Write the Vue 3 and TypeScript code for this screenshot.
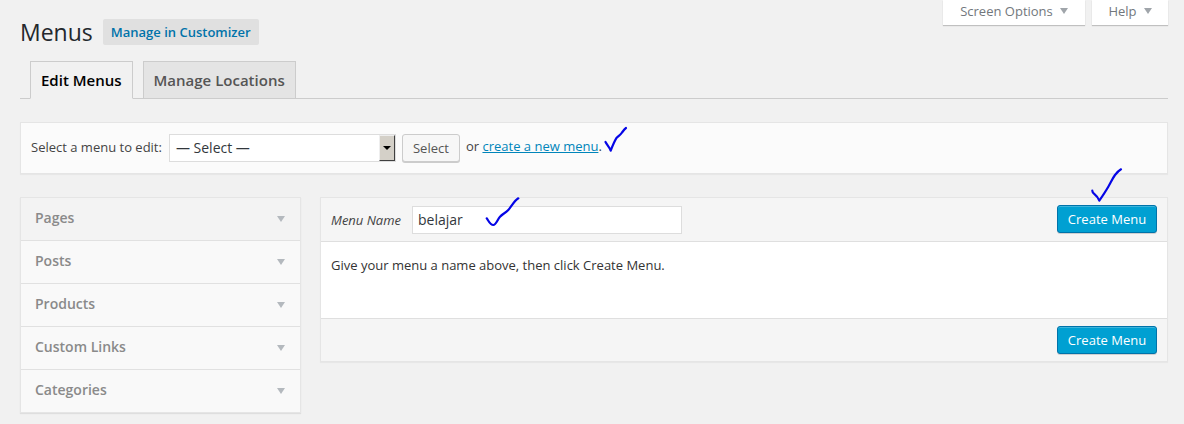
<script setup lang="ts">
const boxes: string[] = ['Pages', 'Posts', 'Products', 'Custom Links', 'Categories']
</script>

<template>
  <div class="page">
    <div class="meta">
      <div class="meta-btn so">Screen Options<span class="arrow"></span></div>
      <div class="meta-btn help">Help<span class="arrow"></span></div>
    </div>

    <div class="heading">
      <h1>Menus</h1>
      <a class="title-action">Manage in Customizer</a>
    </div>

    <div class="tabs">
      <div class="tab active">Edit Menus</div>
      <div class="tab">Manage Locations</div>
    </div>

    <div class="manage">
      <span class="lbl">Select a menu to edit:</span>
      <div class="select">
        <span class="sel-text">— Select —</span>
        <span class="sel-btn"><i></i></span>
      </div>
      <button class="btn">Select</button>
      <span class="or">or <a>create a new menu</a>.</span>
    </div>

    <div class="columns">
      <div class="side">
        <div v-for="(b, i) in boxes" :key="b" class="box" :class="{ first: i === 0 }">
          <span>{{ b }}</span>
          <i class="box-arrow"></i>
        </div>
      </div>
      <div class="editor">
        <div class="ed-head">
          <label>Menu Name</label>
          <div class="name-input">belajar</div>
          <button class="primary top">Create Menu</button>
        </div>
        <div class="ed-body">Give your menu a name above, then click Create Menu.</div>
        <div class="ed-foot">
          <button class="primary">Create Menu</button>
        </div>
      </div>
    </div>

    <svg class="marks" width="1184" height="424" viewBox="0 0 1184 424" fill="none" stroke="#0505e6" stroke-width="2.2" stroke-linecap="round" stroke-linejoin="round">
      <path d="M605.5 142 C607 145 609.5 147 610.7 150.7 C612.5 146 614.5 141 616.7 137.7 C619 135.5 620.5 135 622 132.5 C623.5 130.5 624.5 129 626 128" />
      <path d="M486.7 218.3 C488.5 220.5 490 225 493.3 225 C496 225 497.5 219.5 500 216.7 C502.5 214 505.5 213 508.3 210 C511.5 206.5 514 201 518.3 198.3" />
      <path d="M1092.3 190.7 C1092.3 194.5 1096.5 193.5 1099.3 200.7 C1102.5 196 1105.5 191.5 1108.3 186.7 C1110.5 183 1112.5 178.5 1115 175 C1117 172.5 1119 170.5 1121 169.3" />
    </svg>
  </div>
</template>

<style>
html, body { margin: 0; background: #f1f1f1; }
</style>

<style scoped>
.page {
  position: relative;
  width: 1184px;
  height: 424px;
  box-sizing: border-box;
  padding: 0 16px 0 20px;
  overflow: hidden;
  background: #f1f1f1;
  color: #444;
  font-family: "Open Sans", sans-serif;
  font-size: 13px;
}
.meta { display: flex; justify-content: flex-end; gap: 7px; height: 0; }
.meta-btn {
  height: 25px;
  box-sizing: border-box;
  background: #fff;
  box-shadow: 0 1px 1px rgba(0,0,0,.2);
  color: #72777c;
  line-height: 23px;
  display: flex;
  justify-content: center;
  gap: 7px;
}
.so { width: 142px; }
.help { width: 76px; }
.arrow {
  width: 0; height: 0;
  margin-top: 8px;
  border-left: 4px solid transparent;
  border-right: 4px solid transparent;
  border-top: 6px solid #a0a5aa;
}
.heading { display: flex; align-items: flex-start; padding-top: 19px; height: 42px; box-sizing: content-box; }
h1 { margin: 0; font-size: 23px; font-weight: 400; line-height: 26px; color: #23282d; }
.title-action {
  margin-left: 10px;
  height: 26px;
  box-sizing: border-box;
  padding: 0 8px;
  background: #e0e0e0;
  border-radius: 2px;
  color: #0073aa;
  font-weight: 600;
  line-height: 26px;
}
.tabs {
  display: flex;
  gap: 10px;
  height: 38px;
  box-sizing: border-box;
  padding-left: 10px;
  border-bottom: 1px solid #ccc;
}
.tab {
  height: 38px;
  box-sizing: border-box;
  padding: 0 10px;
  border: 1px solid #ccc;
  background: #e4e4e4;
  color: #555;
  font-size: 15px;
  font-weight: 600;
  line-height: 36px;
}
.tab.active { background: #f1f1f1; border-bottom-color: #f1f1f1; color: #000; }
.manage {
  margin-top: 23px;
  height: 52px;
  box-sizing: border-box;
  border: 1px solid #e5e5e5;
  background: #fbfbfb;
  box-shadow: 0 1px 1px rgba(0,0,0,.04);
  padding: 11px 10px 0;
  display: flex;
  align-items: flex-start;
}
.lbl { line-height: 26px; white-space: nowrap; }
.select {
  margin-left: 7px;
  width: 227px;
  height: 28px;
  box-sizing: border-box;
  border: 1px solid #ddd;
  background: #fff;
  display: flex;
  justify-content: space-between;
  font-size: 14px;
  line-height: 26px;
  color: #32373c;
}
.sel-text { padding-left: 6px; }
.sel-btn {
  width: 16px;
  height: 26px;
  box-sizing: border-box;
  background: #d4d0c8;
  border: 1px solid;
  border-color: #eee #404040 #404040 #eee;
  display: flex;
  align-items: center;
  justify-content: center;
}
.sel-btn i {
  width: 0; height: 0;
  border-left: 4px solid transparent;
  border-right: 4px solid transparent;
  border-top: 4px solid #000;
}
.btn {
  margin-left: 6px;
  width: 58px;
  height: 28px;
  box-sizing: border-box;
  padding: 0;
  border: 1px solid #ccc;
  border-radius: 3px;
  background: #f7f7f7;
  box-shadow: 0 1px 0 #ccc;
  color: #555;
  font: 13px/26px "Open Sans", sans-serif;
}
.or { margin-left: 6px; line-height: 24px; white-space: nowrap; }
.or a { color: #0085ba; text-decoration: underline; }
.columns { margin-top: 23px; display: flex; align-items: flex-start; gap: 19px; }
.side {
  width: 281px;
  box-sizing: border-box;
  border: 1px solid #e5e5e5;
  box-shadow: 0 1px 1px rgba(0,0,0,.08);
  background: #f9f9f9;
}
.box {
  height: 43px;
  box-sizing: border-box;
  border-top: 1px solid #e1e1e1;
  padding: 0 14px 4px;
  display: flex;
  align-items: center;
  justify-content: space-between;
  color: #8a8a8a;
  font-size: 14px;
  font-weight: 600;
}
.box.first { height: 42px; border-top: 0; background: #f3f3f3; }
.box-arrow {
  width: 0; height: 0;
  margin: 4px 1px 0 0;
  border-left: 4px solid transparent;
  border-right: 4px solid transparent;
  border-top: 6px solid #b4b9be;
}
.editor {
  width: 848px;
  box-sizing: border-box;
  border: 1px solid #e5e5e5;
  box-shadow: 0 1px 1px rgba(0,0,0,.04);
  background: #f5f5f5;
}
.ed-head {
  height: 44px;
  box-sizing: border-box;
  padding: 8px 10px 0;
  border-bottom: 1px solid #dfdfdf;
  display: flex;
  align-items: flex-start;
}
label { font-style: italic; line-height: 28px; width: 81px; }
.name-input {
  width: 270px;
  height: 28px;
  box-sizing: border-box;
  border: 1px solid #ddd;
  background: #fff;
  padding-left: 5px;
  font-size: 14px;
  line-height: 26px;
  color: #32373c;
}
.primary {
  margin-left: auto;
  width: 100px;
  height: 28px;
  box-sizing: border-box;
  padding: 0;
  border: 1px solid #0073aa;
  border-radius: 3px;
  background: #00a0d2;
  color: #fff;
  font: 13px/26px "Open Sans", sans-serif;
  box-shadow: inset 0 1px 0 rgba(120,200,230,.5), 0 1px 0 rgba(0,0,0,.15);
}
.primary.top { margin-top: -1px; }
.ed-body {
  height: 77px;
  box-sizing: border-box;
  padding: 14px 10px 0;
  background: #fff;
  color: #333;
  line-height: 18px;
  border-bottom: 1px solid #dfdfdf;
}
.ed-foot {
  height: 42px;
  box-sizing: border-box;
  padding: 7px 10px 0;
  display: flex;
}
.marks { position: absolute; left: 0; top: 0; pointer-events: none; }
</style>
